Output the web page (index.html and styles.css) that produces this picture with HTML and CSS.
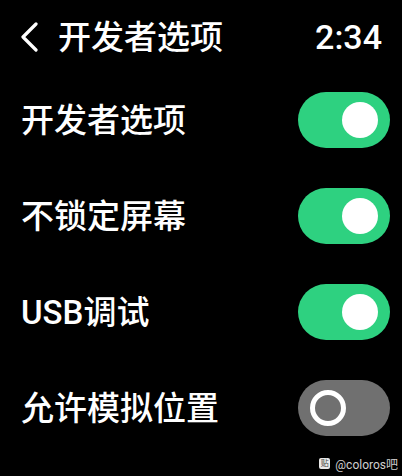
FILE: index.html
```html
<!DOCTYPE html>
<html lang="zh-CN">
<head>
  <meta charset="UTF-8" />
  <meta name="viewport" content="width=device-width, initial-scale=1.0"/>
  <title>开发者选项</title>
  <link rel="stylesheet" href="styles.css">
</head>
<body>
  <header class="topbar">
    <a class="back" href="#">
      <svg width="18" height="30" viewBox="0 0 18 30">
        <polyline points="16,2 3,15 16,28" fill="none" stroke="#fff" stroke-width="3.2" stroke-linecap="round" stroke-linejoin="round"/>
      </svg>
    </a>
    <h1 class="title">开发者选项</h1>
    <span class="time">2:34</span>
  </header>

  <main class="list">
    <div class="row">
      <span class="label">开发者选项</span>
      <span class="switch on"><span class="knob"></span></span>
    </div>
    <div class="row">
      <span class="label">不锁定屏幕</span>
      <span class="switch on"><span class="knob"></span></span>
    </div>
    <div class="row">
      <span class="label">USB调试</span>
      <span class="switch on"><span class="knob"></span></span>
    </div>
    <div class="row">
      <span class="label">允许模拟位置</span>
      <span class="switch"><span class="knob"></span></span>
    </div>
  </main>

  <div class="mark">
    <span class="mark-icon">贴</span>
    <span>@coloros吧</span>
  </div>
</body>
</html>
```

FILE: styles.css
```css
html, body {
  margin: 0;
  padding: 0;
  background: #000;
  color: #fff;
  font-family: Roboto, "Noto Sans CJK SC", sans-serif;
}

body {
  position: relative;
  width: 402px;
  height: 476px;
  overflow: hidden;
}

/* Header */
.topbar {
  display: flex;
  align-items: center;
  height: 72px;
  padding: 2px 20px 0 20px;
  box-sizing: border-box;
}

.back {
  display: flex;
  width: 20px;
  margin-right: 18px;
}

.title {
  flex: 1;
  margin: 0;
  font-size: 33px;
  font-weight: 500;
  line-height: 1;
}

.time {
  font-size: 34px;
  font-weight: 500;
  line-height: 1;
}

/* Toggle rows */
.list {
  display: flex;
  flex-direction: column;
}

.row {
  display: flex;
  justify-content: space-between;
  align-items: center;
  height: 96px;
  padding: 0 12px 0 21px;
}

.label {
  font-size: 33px;
  font-weight: 500;
  line-height: 1;
}

.switch {
  display: flex;
  align-items: center;
  width: 92px;
  height: 56px;
  border-radius: 28px;
  background: #707070;
  padding: 0 12px;
  box-sizing: border-box;
}

.switch .knob {
  width: 36px;
  height: 36px;
  border-radius: 50%;
  border: 5px solid #fff;
  box-sizing: border-box;
}

.switch.on {
  background: #2ed180;
  justify-content: flex-end;
}

.switch.on .knob {
  background: #fff;
  border: none;
}

/* Watermark in the corner */
.mark {
  position: absolute;
  right: 4px;
  bottom: 4px;
  display: flex;
  align-items: center;
  gap: 5px;
  font-size: 12px;
  color: #d0d0d0;
}

.mark-icon {
  display: block;
  flex: none;
  width: 11px;
  height: 11px;
  line-height: 11px;
  text-align: center;
  border-radius: 2px;
  background: #e8e8e8;
  color: #444;
  font-size: 8px;
  overflow: hidden;
}
```
